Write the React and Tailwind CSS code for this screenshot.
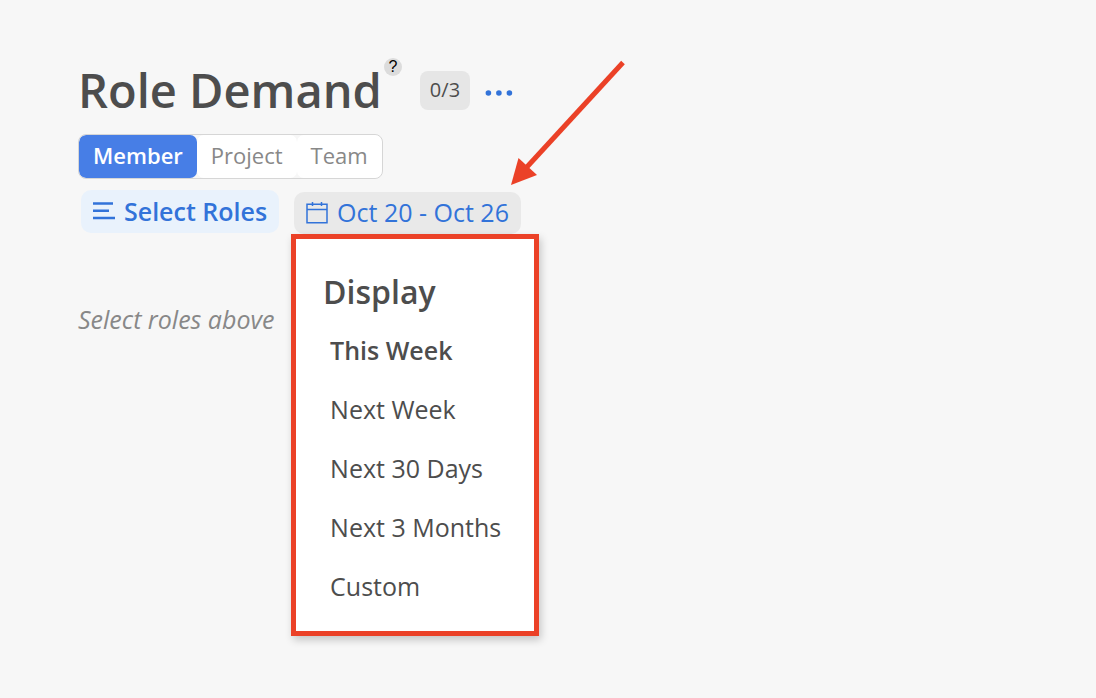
import { useState } from "react";

const tabs = ["Member", "Project", "Team"];

const ranges = ["This Week", "Next Week", "Next 30 Days", "Next 3 Months", "Custom"];

function RolesIcon() {
  return (
    <svg width="22" height="20" viewBox="0 0 22 20" fill="none" stroke="currentColor" strokeWidth="2.5" aria-hidden="true">
      <path d="M0 1.5h20M0 8.7h16M0 16h22" />
    </svg>
  );
}

function CalendarIcon() {
  return (
    <svg width="22" height="22" viewBox="0 0 22 22" fill="none" stroke="currentColor" strokeWidth="1.5" aria-hidden="true">
      <path d="M1 2.2h20v18.6H1zM1 7.5h20M6.5 0v4M15.5 0v4" />
    </svg>
  );
}

function DotsIcon() {
  return (
    <svg width="28" height="6" viewBox="0 0 28 6" fill="currentColor" aria-hidden="true">
      <circle cx="3.4" cy="3" r="2.8" />
      <circle cx="13.9" cy="3" r="2.8" />
      <circle cx="24.4" cy="3" r="2.8" />
    </svg>
  );
}

function Arrow() {
  return (
    <svg
      className="pointer-events-none absolute bottom-[49px] left-[217px]"
      width="115"
      height="125"
      viewBox="0 0 115 125"
      aria-hidden="true"
    >
      <path d="M112 2.5L15 108" stroke="#eb4127" strokeWidth="5" />
      <path d="M0 125L7.5 98L26 115Z" fill="#eb4127" />
    </svg>
  );
}

function RangeMenu({ value, onChange }) {
  return (
    <div className="absolute top-[42px] -left-[3px] z-10 border-5 border-[#eb4127] bg-white pt-[31px] pr-[33px] pb-[15px] pl-[27px] text-[#4d4d4d] shadow-[2px_4px_8px_rgba(0,0,0,0.2)]">
      <h2 className="text-[32px] leading-[44px] font-semibold">Display</h2>
      <ul className="mt-[7px] pl-[7px]">
        {ranges.map((range) => (
          <li key={range}>
            <button
              type="button"
              onClick={() => onChange(range)}
              className={`block h-[59px] text-left text-[25px] whitespace-nowrap ${range === value ? "font-semibold" : ""}`}
            >
              {range}
            </button>
          </li>
        ))}
      </ul>
    </div>
  );
}

export default function App() {
  const [tab, setTab] = useState("Member");
  const [range, setRange] = useState("This Week");

  return (
    <main className="min-h-screen bg-[#f7f7f7] px-[78px] pt-[58px] font-['Open_Sans','Noto_Sans',sans-serif] text-[#4d4d4d]">
      <header className="flex items-center">
        <h1 className="text-[47px] leading-[64px] font-semibold">Role Demand</h1>
        <button
          type="button"
          aria-label="Help"
          className="ml-[2px] flex size-[18px] items-center justify-center self-start rounded-full bg-[#dcdcdc] font-['Liberation_Sans',sans-serif] text-base leading-none text-black"
        >
          ?
        </button>
        <span className="ml-[18px] flex h-[39px] items-center rounded-lg bg-[#e6e6e6] px-[10px] text-[20px]">0/3</span>
        <button type="button" aria-label="More" className="ml-[15px] pt-[5px] text-[#3273d9]">
          <DotsIcon />
        </button>
      </header>

      <div className="mt-3 flex w-fit overflow-hidden rounded-lg border border-[#d6d6d6] bg-[#f7f7f7]">
        {tabs.map((name) => (
          <button
            key={name}
            type="button"
            onClick={() => setTab(name)}
            className={`h-[43px] rounded-[7px] px-[14px] pb-[2px] text-[22px] ${
              name === tab ? "bg-[#477ee6] font-semibold text-white" : "bg-white text-[#888]"
            }`}
          >
            {name}
          </button>
        ))}
      </div>

      <div className="mt-[11px] flex items-start gap-[15px] pl-[3px] text-[#3273d9]">
        <button type="button" className="flex h-[43px] items-center gap-[9px] rounded-[10px] bg-[#e9f2fc] px-3 text-[25px] font-semibold">
          <RolesIcon />
          Select Roles
        </button>
        <div className="relative mt-[2px]">
          <button type="button" className="flex h-[42px] items-center gap-[9px] rounded-[10px] bg-[#e9e9e9] px-3 text-[25px]">
            <CalendarIcon />
            Oct 20 - Oct 26
          </button>
          <Arrow />
          <RangeMenu value={range} onChange={setRange} />
        </div>
      </div>

      <p className="mt-[68px] text-[25px] leading-[34px] text-[#888] italic">Select roles above</p>
    </main>
  );
}
